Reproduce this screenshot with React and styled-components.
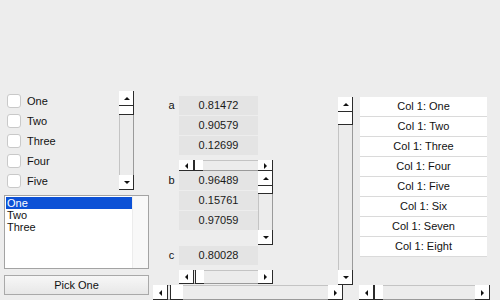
import styled, { createGlobalStyle } from 'styled-components';

const GlobalStyle = createGlobalStyle`
  html, body {
    margin: 0;
    padding: 0;
    background: #ededed;
  }
  body {
    font-family: "Liberation Sans", Arial, sans-serif;
    font-size: 11px;
    color: #111;
  }
`;

const checks = ['One', 'Two', 'Three', 'Four', 'Five'];
const listItems = ['One', 'Two', 'Three'];
const groups = [
  { label: 'a', values: ['0.81472', '0.90579', '0.12699'] },
  { label: 'b', values: ['0.96489', '0.15761', '0.97059'] },
  { label: 'c', values: ['0.80028'] },
];
const tableRows = ['One', 'Two', 'Three', 'Four', 'Five', 'Six', 'Seven', 'Eight'];

// ---- scrollbar pieces ----
const SBar = styled.div`
  display: flex;
  flex-direction: ${(p) => (p.$v ? 'column' : 'row')};
  flex-shrink: 0;
  width: ${(p) => (p.$v ? p.$thick : p.$len)}px;
  height: ${(p) => (p.$v ? p.$len : p.$thick)}px;
  background: #ececec;
  box-shadow: ${(p) =>
    p.$v
      ? 'inset 1px 0 0 #c4c4c4, inset -1px 0 0 #9a9a9a'
      : 'inset 0 1px 0 #c4c4c4, inset 0 -1px 0 #9a9a9a'};
`;
const SButton = styled.div`
  flex: 0 0 ${(p) => p.$size}px;
  display: flex;
  align-items: center;
  justify-content: center;
  background: #fff;
  box-shadow: inset -1px -1px 0 #2b2b2b;
`;
const SThumb = styled.div`
  flex: 0 0 ${(p) => p.$size}px;
  background: #fff;
  box-shadow: ${(p) =>
    p.$v ? 'inset -1px -1px 0 #2b2b2b' : 'inset 1px -1px 0 #2b2b2b'};
`;
const SGap = styled.div`
  flex: ${(p) => (p.$fill ? '1 1 auto' : `0 0 ${p.$size}px`)};
`;
const Arrow = styled.span`
  width: 0;
  height: 0;
  border-style: solid;
  border-color: transparent;
  ${(p) =>
    p.$dir === 'up'
      ? 'border-width: 0 3px 3px 3px; border-bottom-color: #111;'
      : p.$dir === 'down'
      ? 'border-width: 3px 3px 0 3px; border-top-color: #111;'
      : p.$dir === 'left'
      ? 'border-width: 3px 3px 3px 0; border-right-color: #111;'
      : 'border-width: 3px 0 3px 3px; border-left-color: #111;'}
`;

const ScrollBar = ({ vertical, len, thick = 15, at = 0, size = 9 }) => (
  <SBar $v={vertical} $len={len} $thick={thick}>
    <SButton $size={15}>
      <Arrow $dir={vertical ? 'up' : 'left'} />
    </SButton>
    <SGap $size={at} />
    <SThumb $v={vertical} $size={size} />
    <SGap $fill />
    <SButton $size={15}>
      <Arrow $dir={vertical ? 'down' : 'right'} />
    </SButton>
  </SBar>
);

// ---- layout ----
const Page = styled.div`
  display: flex;
  width: 500px;
  height: 300px;
  overflow: hidden;
`;
const LeftCol = styled.div`
  width: 153px;
  display: flex;
  flex-direction: column;
  padding-top: 91px;
  box-sizing: border-box;
`;
const CheckArea = styled.div`
  display: flex;
  height: 99px;
`;
const CheckList = styled.div`
  width: 119px;
  padding: 3px 0 0 7px;
  box-sizing: border-box;
`;
const CheckRow = styled.div`
  display: flex;
  align-items: flex-start;
  height: 20px;
  gap: 6px;
`;
const Box = styled.span`
  width: 14px;
  height: 14px;
  box-sizing: border-box;
  border: 1px solid #c9c9c9;
  border-radius: 3px;
  background: #fff;
`;
const CheckLabel = styled.span`
  line-height: 14px;
  font-size: 11px;
`;
const ListBox = styled.div`
  display: flex;
  margin: 5px 0 0 4px;
  width: 145px;
  height: 74px;
  box-sizing: border-box;
  border: 1px solid #a3a3a3;
  background: #fff;
`;
const ListItems = styled.div`
  flex: 1;
  padding: 1px 0 0 1px;
`;
const ListItem = styled.div`
  height: 12px;
  line-height: 12px;
  padding-left: 1px;
  font-size: 11px;
  background: ${(p) => (p.$sel ? '#0c51d6' : 'transparent')};
  color: ${(p) => (p.$sel ? '#fff' : '#111')};
`;
const ListStrip = styled.div`
  width: 15px;
  background: #f8f8f8;
  border-left: 1px solid #ececec;
`;
const PickButton = styled.button`
  margin: 6px 0 0 4px;
  width: 145px;
  height: 20px;
  box-sizing: border-box;
  border: 1px solid #a9a9a9;
  background: linear-gradient(#f7f7f7, #e7e7e7);
  font-family: "Liberation Sans", Arial, sans-serif;
  font-size: 11px;
  color: #111;
  padding: 0;
`;

const MidCol = styled.div`
  width: 206px;
  display: flex;
  flex-direction: column;
`;
const MidTop = styled.div`
  height: 285px;
  display: flex;
  align-items: flex-start;
`;
const Groups = styled.div`
  width: 185px;
  padding: 96px 0 0 11px;
  box-sizing: border-box;
  display: flex;
  flex-direction: column;
`;
const Group = styled.div`
  display: flex;
  align-items: flex-start;
`;
const GLabel = styled.div`
  width: 15px;
  height: 19px;
  line-height: 19px;
  text-align: center;
  font-size: 11px;
`;
const GBody = styled.div`
  display: flex;
  flex-direction: ${(p) => (p.$row ? 'row' : 'column')};
  align-items: flex-start;
`;
const Cells = styled.div`
  display: flex;
  flex-direction: column;
  gap: 1px;
  width: 79px;
`;
const Cell = styled.div`
  height: 19px;
  line-height: 19px;
  text-align: center;
  background: #e4e4e4;
  font-size: 11px;
  color: #1a1a1a;
`;
const HGap = styled.div`
  height: ${(p) => p.$h}px;
`;
const BigV = styled.div`
  margin-top: 97px;
`;

const RightCol = styled.div`
  width: 141px;
  display: flex;
  flex-direction: column;
  padding-top: 97px;
  box-sizing: border-box;
`;
const Table = styled.div`
  margin-left: 1px;
  width: 127px;
  display: flex;
  flex-direction: column;
`;
const TRow = styled.div`
  height: 19px;
  line-height: 19px;
  text-align: center;
  background: #fff;
  border-bottom: 1px solid #dadada;
  font-size: 11px;
`;
const RightScroll = styled.div`
  margin-top: auto;
`;

export default function App() {
  return (
    <>
      <GlobalStyle />
      <Page>
        <LeftCol>
          <CheckArea>
            <CheckList>
              {checks.map((c) => (
                <CheckRow key={c}>
                  <Box />
                  <CheckLabel>{c}</CheckLabel>
                </CheckRow>
              ))}
            </CheckList>
            <ScrollBar vertical len={99} at={0} size={9} />
          </CheckArea>
          <ListBox>
            <ListItems>
              {listItems.map((it, i) => (
                <ListItem key={it} $sel={i === 0}>
                  {it}
                </ListItem>
              ))}
            </ListItems>
            <ListStrip />
          </ListBox>
          <PickButton>Pick One</PickButton>
        </LeftCol>

        <MidCol>
          <MidTop>
            <Groups>
              <Group>
                <GLabel>{groups[0].label}</GLabel>
                <GBody>
                  <Cells>
                    {groups[0].values.map((v) => (
                      <Cell key={v}>{v}</Cell>
                    ))}
                  </Cells>
                  <HGap $h={5} />
                  <ScrollBar len={94} thick={11} at={0} size={9} />
                </GBody>
              </Group>
              <Group>
                <GLabel>{groups[1].label}</GLabel>
                <GBody $row>
                  <Cells>
                    {groups[1].values.map((v) => (
                      <Cell key={v}>{v}</Cell>
                    ))}
                  </Cells>
                  <ScrollBar vertical len={74} at={0} size={8} />
                </GBody>
              </Group>
              <HGap $h={1} />
              <Group>
                <GLabel>{groups[2].label}</GLabel>
                <GBody>
                  <Cells>
                    {groups[2].values.map((v) => (
                      <Cell key={v}>{v}</Cell>
                    ))}
                  </Cells>
                  <HGap $h={5} />
                  <ScrollBar len={94} thick={14} at={1} size={9} />
                </GBody>
              </Group>
            </Groups>
            <BigV>
              <ScrollBar vertical len={188} at={0} size={13} />
            </BigV>
          </MidTop>
          <ScrollBar len={190} at={2} size={13} />
        </MidCol>

        <RightCol>
          <Table>
            {tableRows.map((r) => (
              <TRow key={r}>Col 1: {r}</TRow>
            ))}
          </Table>
          <RightScroll>
            <ScrollBar len={131} at={0} size={9} />
          </RightScroll>
        </RightCol>
      </Page>
    </>
  );
}
